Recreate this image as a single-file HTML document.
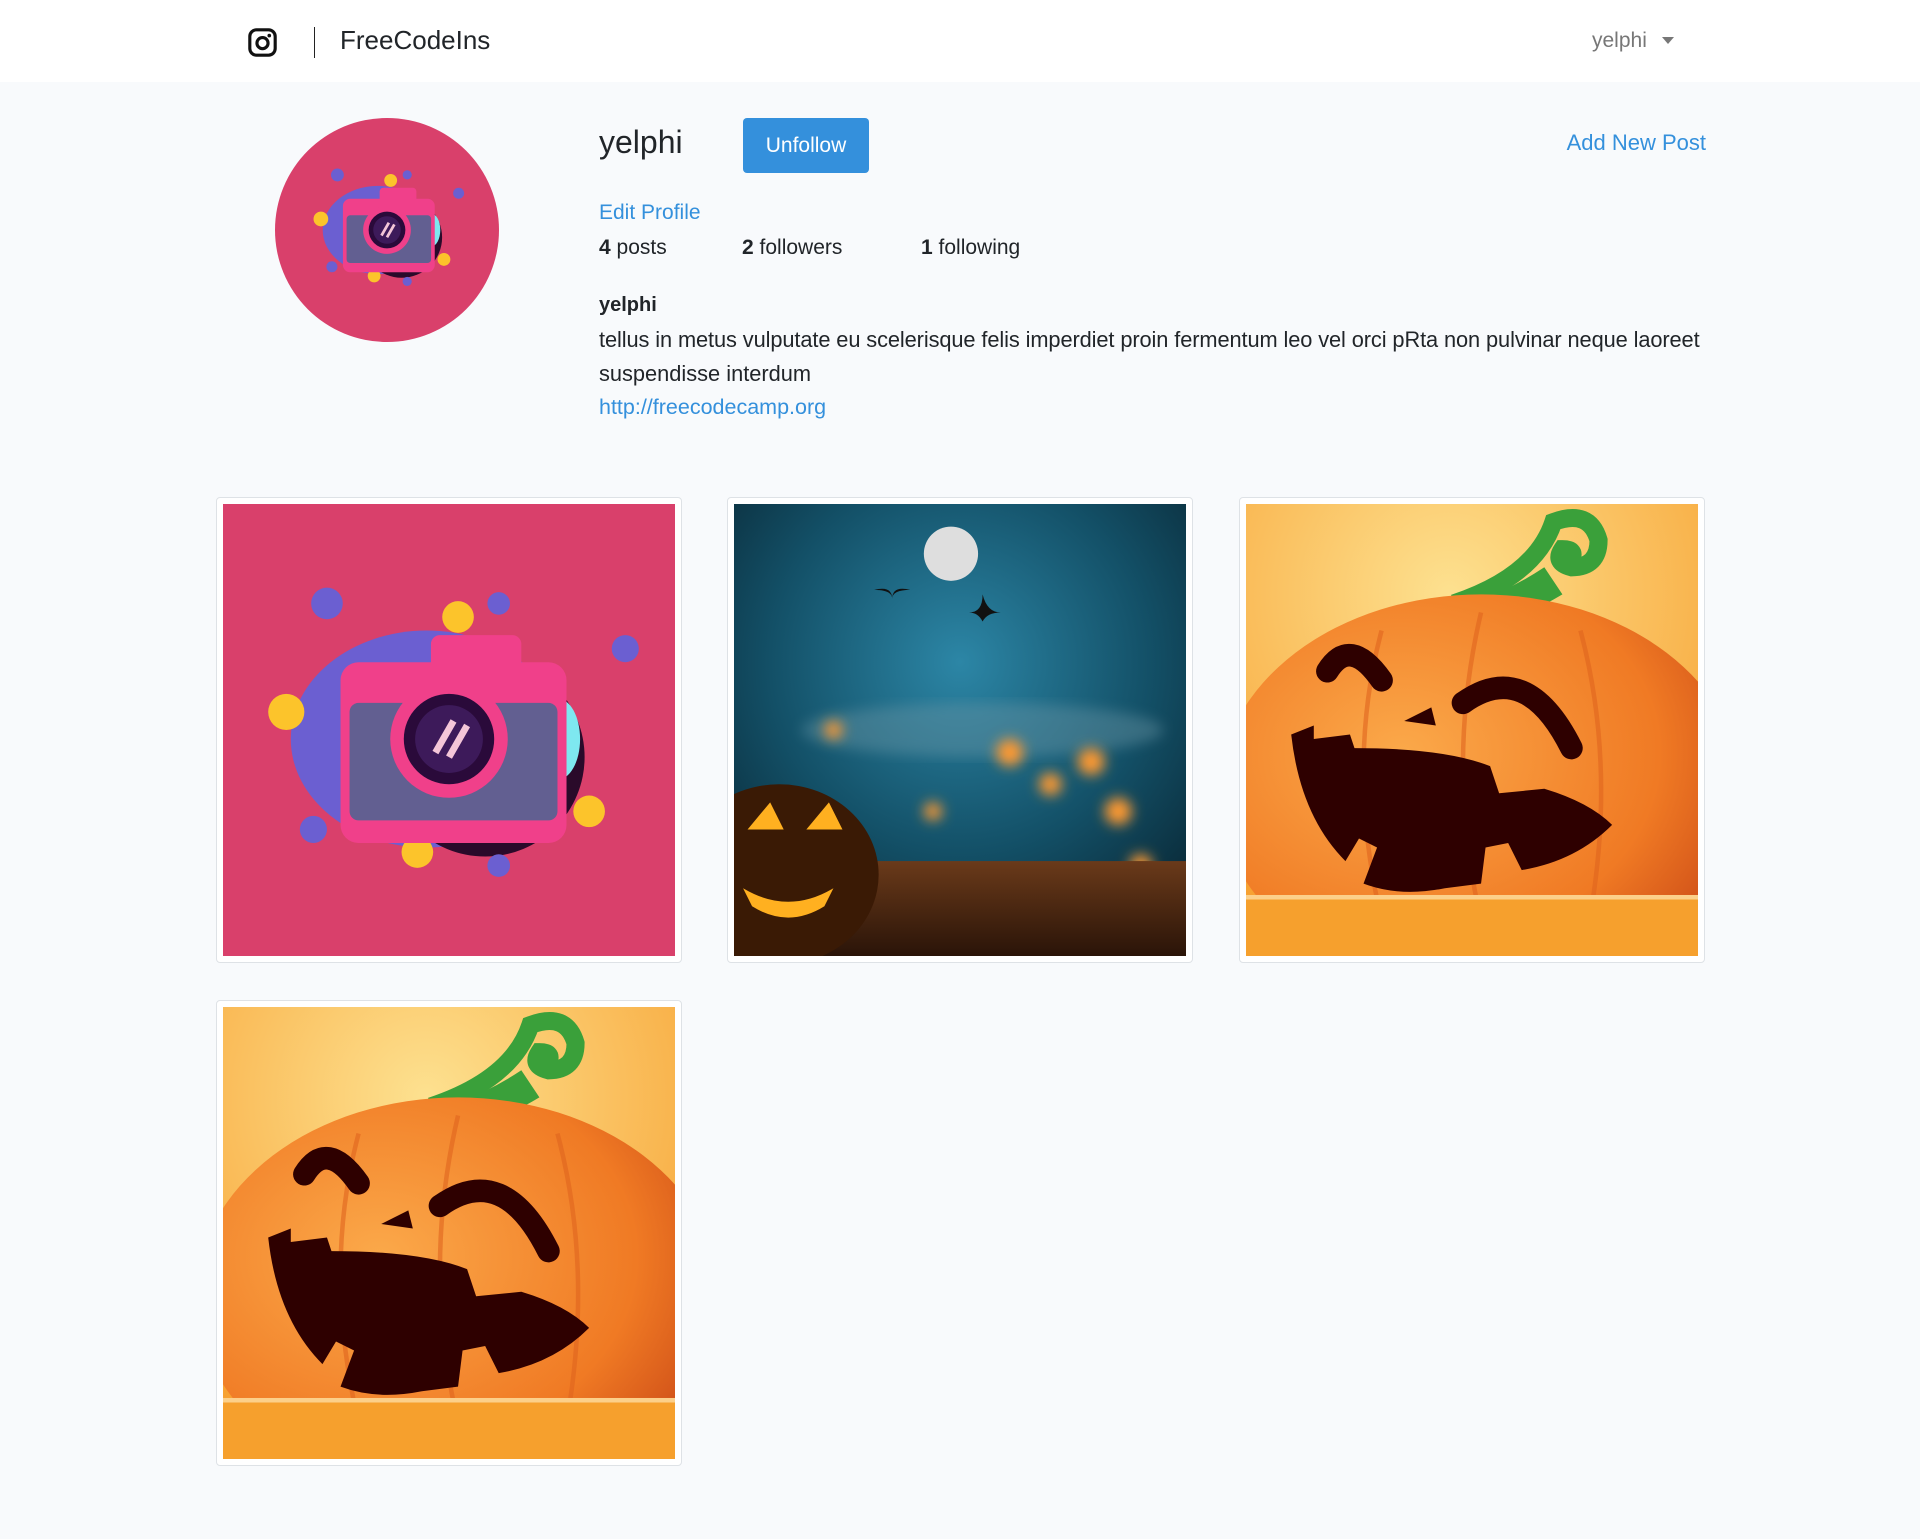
<!DOCTYPE html>
<html><head><meta charset="utf-8"><style>
*{box-sizing:border-box;margin:0;padding:0}
body{width:1920px;height:1539px;background:#f8fafc;font-family:"Liberation Sans",sans-serif;color:#212529;position:relative;overflow:hidden}
.hdr{position:absolute;left:0;top:0;width:1920px;height:82px;background:#fff}
.abs{position:absolute;white-space:nowrap}
.blue{color:#3490dc}
.card{position:absolute;width:466px;height:466px;background:#fff;border:1px solid #dee2e6;border-radius:4px;padding:6px}
.card svg{display:block;width:452px;height:452px}
</style></head><body>
<div class="hdr">
 <svg class="abs" style="left:248px;top:28px" width="29" height="29" viewBox="0 0 24 24"><rect x="1.5" y="1.5" width="21" height="21" rx="5.5" fill="none" stroke="#111" stroke-width="2.6"/><circle cx="12" cy="12.5" r="4.6" fill="none" stroke="#111" stroke-width="2.6"/><circle cx="17.6" cy="6.3" r="1.5" fill="#111"/></svg>
 <div class="abs" style="left:314px;top:27px;width:1px;height:31px;background:#222"></div>
 <div class="abs" style="left:340px;top:25px;font-size:26px;color:#212529">FreeCodeIns</div>
 <div class="abs" style="left:1592px;top:29px;font-size:21px;color:#777">yelphi</div>
 <div class="abs" style="left:1662px;top:37px;width:0;height:0;border-left:6px solid transparent;border-right:6px solid transparent;border-top:7px solid #777"></div>
</div>

<svg class="abs" style="left:275px;top:118px" width="224" height="224" viewBox="0 0 100 100">
 <circle cx="50" cy="50" r="50" fill="#d9406b"/>
 <g transform="translate(50,50) scale(0.82) translate(-50,-52)"><use href="#cam"/></g>
</svg>

<div class="abs" style="left:599px;top:124px;font-size:32px">yelphi</div>
<div class="abs" style="left:743px;top:118px;width:126px;height:55px;background:#3490dc;border-radius:4px;color:#fff;font-size:21px;line-height:55px;text-align:center">Unfollow</div>
<div class="abs blue" style="right:214px;top:130px;font-size:22px">Add New Post</div>
<div class="abs blue" style="left:599px;top:201px;font-size:21px">Edit Profile</div>
<div class="abs" style="left:599px;top:236px;font-size:21px"><b>4</b> posts</div>
<div class="abs" style="left:742px;top:236px;font-size:21px"><b>2</b> followers</div>
<div class="abs" style="left:921px;top:236px;font-size:21px"><b>1</b> following</div>
<div class="abs" style="left:599px;top:294px;font-size:20px;font-weight:bold">yelphi</div>
<div class="abs" style="left:599px;top:327px;font-size:21.8px;letter-spacing:-0.1px">tellus in metus vulputate eu scelerisque felis imperdiet proin fermentum leo vel orci pRta non pulvinar neque laoreet</div>
<div class="abs" style="left:599px;top:361px;font-size:21.8px">suspendisse interdum</div>
<div class="abs blue" style="left:599px;top:395px;font-size:21.5px">http://freecodecamp.org</div>

<div class="card" style="left:216px;top:497px">
<svg viewBox="0 0 100 100" preserveAspectRatio="none">
 <rect width="100" height="100" fill="#d9406b"/>
 <g id="cam">
 <ellipse cx="45" cy="52" rx="30" ry="24" fill="#6b5fd1"/>
 <ellipse cx="58" cy="56" rx="22" ry="22" fill="#2a0a2a"/>
 <ellipse cx="74" cy="52" rx="5" ry="9" fill="#7ee8f0"/>
 <circle cx="14" cy="46" r="4" fill="#fcc42b"/><circle cx="52" cy="25" r="3.5" fill="#fcc42b"/><circle cx="81" cy="68" r="3.5" fill="#fcc42b"/><circle cx="43" cy="77" r="3.5" fill="#fcc42b"/>
 <circle cx="23" cy="22" r="3.5" fill="#6b5fd1"/><circle cx="61" cy="22" r="2.5" fill="#6b5fd1"/><circle cx="89" cy="32" r="3" fill="#6b5fd1"/><circle cx="61" cy="80" r="2.5" fill="#6b5fd1"/><circle cx="20" cy="72" r="3" fill="#6b5fd1"/>
 <rect x="46" y="29" width="20" height="9" rx="2" fill="#f0408a"/>
 <rect x="26" y="35" width="50" height="40" rx="4" fill="#f0408a"/>
 <rect x="28" y="44" width="46" height="26" rx="2" fill="#625f91"/>
 <circle cx="50" cy="52" r="13" fill="#f0408a"/><circle cx="50" cy="52" r="10" fill="#2a0a3a"/><circle cx="50" cy="52" r="7.5" fill="#3d1a5a"/>
 <path d="M47 55 L51 48 M50 56 L54 49" stroke="#f4c6d8" stroke-width="1.5"/>
 </g>
</svg></div>

<div class="card" style="left:727px;top:497px">
<svg viewBox="0 0 100 100" preserveAspectRatio="none">
 <defs><radialGradient id="f" cx="0.5" cy="0.35" r="0.7"><stop offset="0" stop-color="#2c86a6"/><stop offset="0.6" stop-color="#135067"/><stop offset="1" stop-color="#0a2a38"/></radialGradient>
 <filter id="b"><feGaussianBlur stdDeviation="1.5"/></filter>
 <linearGradient id="g" x1="0" y1="0" x2="0" y2="1"><stop offset="0" stop-color="#6a3a1a"/><stop offset="1" stop-color="#2a1408"/></linearGradient></defs>
 <rect width="100" height="100" fill="url(#f)"/>
 <ellipse cx="55" cy="50" rx="40" ry="6" fill="#6f9aa8" opacity="0.4" filter="url(#b)"/>
 <circle cx="48" cy="11" r="6" fill="#dedede"/>
 <path d="M31 19 q4 -1 4 2 q0 -3 4 -2 q-4 0 -4 2 q0 -2 -4 -2z" fill="#111"/>
 <path d="M52 24 q3 0 3 -4 q1 4 4 4 q-3 0 -4 2 q-1 -2 -3 -2z" fill="#111"/>
 <g filter="url(#b)" fill="#ff9a30"><circle cx="61" cy="55" r="3"/><circle cx="79" cy="57" r="3"/><circle cx="85" cy="68" r="3"/><circle cx="70" cy="62" r="2.5"/><circle cx="22" cy="50" r="2"/><circle cx="44" cy="68" r="2"/><circle cx="90" cy="80" r="2.5"/></g>
 <rect x="0" y="79" width="100" height="21" fill="url(#g)"/>
 <ellipse cx="10" cy="82" rx="22" ry="20" fill="#3a1a05"/>
 <path d="M3 72 l5 -6 l3 6z M16 72 l5 -6 l3 6z" fill="#ffb020"/>
 <path d="M2 85 q10 6 20 0 l-2 4 q-8 5 -16 0z" fill="#ffb020"/>
</svg></div>

<div class="card" style="left:1239px;top:497px"><svg viewBox="0 0 100 100" preserveAspectRatio="none"><use href="#pk"/></svg></div>
<div class="card" style="left:216px;top:1000px">
<svg viewBox="0 0 100 100" preserveAspectRatio="none">
 <defs><radialGradient id="bg" cx="0.45" cy="0.2" r="0.8"><stop offset="0" stop-color="#fde190"/><stop offset="1" stop-color="#f7a131"/></radialGradient>
 <radialGradient id="pb" cx="0.35" cy="0.4" r="0.7"><stop offset="0" stop-color="#fba94a"/><stop offset="0.7" stop-color="#f07a24"/><stop offset="1" stop-color="#cf4f18"/></radialGradient></defs>
 <g id="pk">
 <rect width="100" height="100" fill="url(#bg)"/>
 <path d="M46 22 q18 -6 22 -18 q8 -3 10 4 q0 6 -6 6 q-4 -1 -2 -4 q3 0 2 2" stroke="#3aa03a" stroke-width="4" fill="none"/>
 <path d="M40 24 q14 -2 26 -10 l4 6 q-10 6 -20 8z" fill="#3aa03a"/>
 <ellipse cx="52" cy="64" rx="58" ry="44" fill="url(#pb)"/>
 <path d="M30 28 q-8 30 0 64 M52 24 q-8 34 0 68 M74 28 q8 30 2 64" stroke="#e0641e" stroke-width="1" fill="none" opacity="0.6"/>
 <path d="M18 37 q5 -8 12 2" stroke="#2e0000" stroke-width="5" fill="none" stroke-linecap="round"/>
 <path d="M48 44 q14 -10 24 10" stroke="#2e0000" stroke-width="5" fill="none" stroke-linecap="round"/>
 <path d="M35 48 l6 -3 l1 4z" fill="#2e0000"/>
 <path d="M10 51 l5 -2 l0 3 l8 -1 l1 3 q20 0 30 4 l2 6 l10 -1 q10 3 15 8 q-8 8 -20 10 l-3 -6 l-5 1 l-1 8 l-8 1 q-10 2 -18 -1 l3 -8 l-4 -2 l-3 5 q-10 -10 -12 -28z" fill="#2e0000"/>
 <rect x="0" y="87" width="100" height="13" fill="#f6a02d"/>
 <rect x="0" y="86.5" width="100" height="1" fill="#fcd08a"/>
 </g>
</svg></div>
</body></html>
